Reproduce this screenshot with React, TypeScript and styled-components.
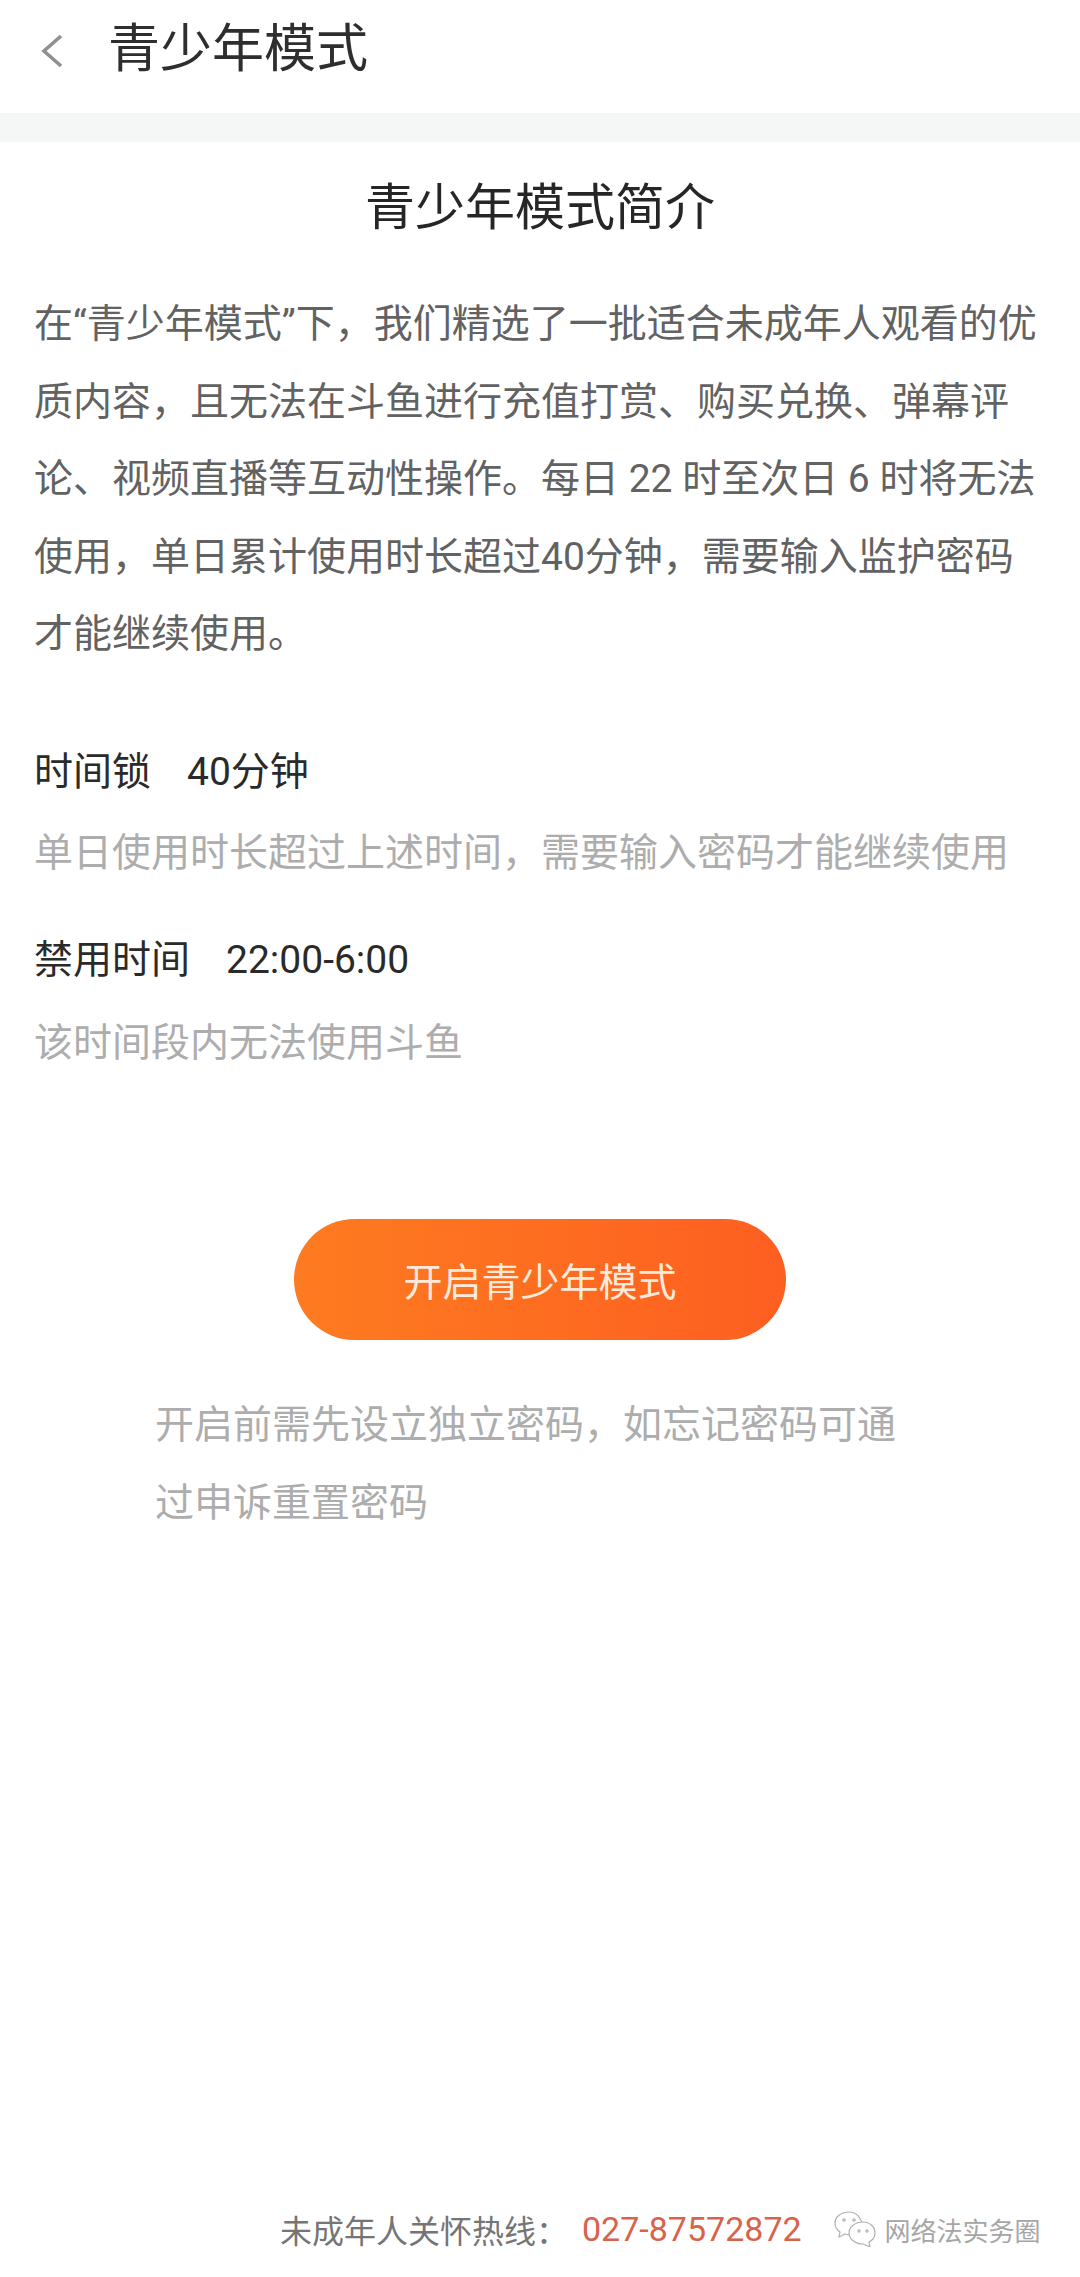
import React from 'react'
import styled, { createGlobalStyle } from 'styled-components'

const GlobalStyle = createGlobalStyle`
  html, body {
    margin: 0;
    padding: 0;
    background: #fff;
  }
  body {
    font-family: Roboto, "Noto Sans CJK SC", sans-serif;
  }
`

const Page = styled.div`
  width: 1080px;
  height: 2277px;
  display: flex;
  flex-direction: column;
  background: #fff;
  overflow: hidden;
`

const Header = styled.header`
  height: 113px;
  display: flex;
  align-items: center;
  padding-left: 40px;
  gap: 44px;
`

const BackIcon = styled.svg`
  width: 24px;
  height: 36px;
  flex: none;
  margin-bottom: 12px;
`

const HeaderTitle = styled.h1`
  margin: 0 0 13px;
  font-size: 52px;
  line-height: 60px;
  font-weight: 400;
  color: #2e2e2e;
`

const Band = styled.div`
  height: 29px;
  background: #f5f6f6;
`

const Content = styled.main`
  flex: 1;
  display: flex;
  flex-direction: column;
  padding: 0 34px;
`

const SectionTitle = styled.h2`
  margin: 36px 0 0;
  font-size: 50px;
  line-height: 60px;
  font-weight: 400;
  color: #262626;
  text-align: center;
`

const Intro = styled.p`
  margin: 48px 0 0;
  font-size: 39px;
  line-height: 77.5px;
  color: #626262;
  white-space: nowrap;
`

const Rule = styled.div<{ $top: number }>`
  margin-top: ${({ $top }) => $top}px;
  display: flex;
  gap: 36px;
  font-size: 39px;
  line-height: 56px;
  color: #2a2a2a;
  white-space: nowrap;
`

const RuleHint = styled.div<{ $top: number }>`
  margin-top: ${({ $top }) => $top}px;
  font-size: 39px;
  line-height: 56px;
  color: #adadad;
  white-space: nowrap;
`

const StartButton = styled.button`
  align-self: center;
  margin-top: 148px;
  width: 492px;
  height: 121px;
  border: 0;
  border-radius: 61px;
  background: linear-gradient(90deg, #fe7b20, #fd5f20);
  color: #fdeadb;
  font-family: inherit;
  font-size: 39px;
`

const Notice = styled.p`
  margin: 46px 0 0;
  padding-left: 121px;
  font-size: 39px;
  line-height: 78px;
  color: #adadad;
  white-space: nowrap;
`

const Footer = styled.footer`
  height: 72px;
  margin-bottom: 12px;
  padding-left: 280px;
  display: flex;
  align-items: center;
  white-space: nowrap;
`

const HotlineLabel = styled.span`
  font-size: 32px;
  color: #757575;
`

const HotlineNumber = styled.span`
  margin-left: 14px;
  font-size: 34px;
  color: #d9634a;
`

const WeChatIcon = styled.svg`
  width: 42px;
  height: 36px;
  margin-left: 32px;
  flex: none;
`

const Watermark = styled.span`
  margin-left: 9px;
  font-size: 26px;
  color: #a6a6a6;
  text-shadow: 1px 1px 0 #fff;
`

export default function App() {
  return (
    <Page>
      <GlobalStyle />
      <Header>
        <BackIcon viewBox="0 0 24 36" fill="none">
          <path d="M21 3 L4 18 L21 33" stroke="#909090" strokeWidth="3.6" />
        </BackIcon>
        <HeaderTitle>青少年模式</HeaderTitle>
      </Header>
      <Band />
      <Content>
        <SectionTitle>青少年模式简介</SectionTitle>
        <Intro>
          在“青少年模式”下，我们精选了一批适合未成年人观看的优
          <br />
          质内容，且无法在斗鱼进行充值打赏、购买兑换、弹幕评
          <br />
          论、视频直播等互动性操作。每日 22 时至次日 6 时将无法
          <br />
          使用，单日累计使用时长超过40分钟，需要输入监护密码
          <br />
          才能继续使用。
        </Intro>
        <Rule $top={70}>
          <span>时间锁</span>
          <span>40分钟</span>
        </Rule>
        <RuleHint $top={25}>单日使用时长超过上述时间，需要输入密码才能继续使用</RuleHint>
        <Rule $top={51}>
          <span>禁用时间</span>
          <span>22:00-6:00</span>
        </Rule>
        <RuleHint $top={27}>该时间段内无法使用斗鱼</RuleHint>
        <StartButton>开启青少年模式</StartButton>
        <Notice>
          开启前需先设立独立密码，如忘记密码可通
          <br />
          过申诉重置密码
        </Notice>
      </Content>
      <Footer>
        <HotlineLabel>未成年人关怀热线：</HotlineLabel>
        <HotlineNumber>027-87572872</HotlineNumber>
        <WeChatIcon viewBox="0 0 42 36" fill="none" stroke="#b0b0b0" strokeWidth="1.2">
          <path d="M15 1 C7 1 1 6 1 12 C1 16 3 19 6 21 L5 26 L11 23 C13 24 15 24 17 24 C22 24 27 21 29 16 C27 6 22 1 15 1 Z" />
          <path d="M29 11 C21 11 15 16 15 22 C15 28 21 33 29 33 L36 36 L35 31 C39 29 41 26 41 22 C41 16 36 11 29 11 Z" fill="#fff" />
          <circle cx="10" cy="9" r="1.2" />
          <circle cx="20" cy="9" r="1.2" />
          <circle cx="25" cy="20" r="1.1" />
          <circle cx="33" cy="20" r="1.1" />
        </WeChatIcon>
        <Watermark>网络法实务圈</Watermark>
      </Footer>
    </Page>
  )
}
